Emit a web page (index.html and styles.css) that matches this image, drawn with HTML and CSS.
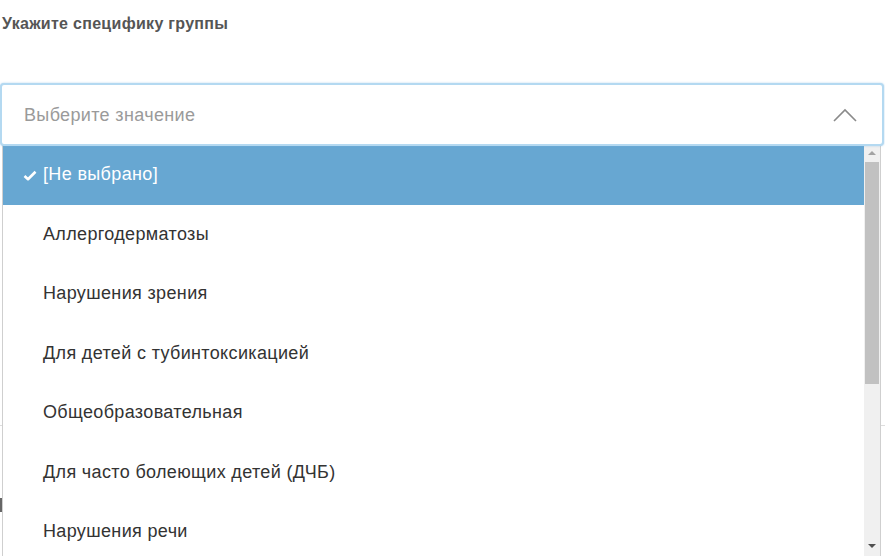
FILE: index.html
```html
<!DOCTYPE html>
<html lang="ru">
<head>
<meta charset="utf-8">
<title>Укажите специфику группы</title>
<link rel="stylesheet" href="styles.css">
</head>
<body>
<div class="page">
  <div class="field-label">Укажите специфику группы</div>
  <div class="select">
    <div class="select-box">
      <span class="placeholder">Выберите значение</span>
      <svg class="chevron" width="24" height="14" viewBox="0 0 24 14"><path d="M1 13 L12 2 L23 13" fill="none" stroke="#8a8a8a" stroke-width="1.6"/></svg>
    </div>
    <div class="dropdown">
      <ul class="options">
        <li class="option selected"><svg class="check" width="14" height="11" viewBox="0 0 14 11"><path d="M1.5 6 L5 9.2 L12.5 1.8" fill="none" stroke="#fff" stroke-width="2.6" stroke-linejoin="round"/></svg>[Не выбрано]</li>
        <li class="option">Аллергодерматозы</li>
        <li class="option">Нарушения зрения</li>
        <li class="option">Для детей с тубинтоксикацией</li>
        <li class="option">Общеобразовательная</li>
        <li class="option">Для часто болеющих детей (ДЧБ)</li>
        <li class="option">Нарушения речи</li>
      </ul>
      <div class="scrollbar">
        <div class="arrow up"></div>
        <div class="thumb"></div>
        <div class="arrow down"></div>
      </div>
    </div>
  </div>
  <div class="peek peek-left-line"></div>
  <div class="peek peek-left-mark"></div>
  <div class="peek peek-right-line"></div>
</div>
</body>
</html>
```

FILE: styles.css
```css
* { box-sizing: border-box; }
html, body { margin: 0; padding: 0; background: #fff; }
body { width: 885px; height: 557px; overflow: hidden; font-family: "Liberation Sans", Arial, sans-serif; }
.page { position: relative; width: 885px; height: 557px; }
.field-label {
  padding: 15px 0 0 2px;
  font-size: 16px;
  letter-spacing: 0.3px;
  font-weight: bold;
  color: #555;
  line-height: 18px;
  height: 83px;
}
.select { width: 885px; }
.select-box {
  height: 63px;
  margin: 0 1px 0 0;
  border: 2px solid #b4d9f1;
  border-radius: 4px;
  box-shadow: 0 0 2px rgba(120, 180, 225, 0.6);
  display: flex;
  align-items: center;
  justify-content: space-between;
  padding: 1px 25px 0 22px;
  background: #fff;
  position: relative;
  z-index: 1;
}
.placeholder { font-size: 18px; letter-spacing: 0.35px; color: #9a9a9a; }
.chevron { display: block; margin-top: 0; }
.dropdown {
  margin-left: 2px;
  width: 879px;
  height: 411px;
  border-left: 1px solid #cfcfcf;
  border-right: 1px solid #cfcfcf;
  display: flex;
  background: #fff;
  overflow: hidden;
  margin-top: -1px;
}
.options { list-style: none; margin: 0; padding: 0; flex: 1; }
.option {
  height: 59.5px;
  display: flex;
  align-items: center;
  padding-left: 40px;
  font-size: 18px;
  letter-spacing: 0.35px;
  color: #333;
}
.option.selected {
  background: #67a7d2;
  color: #fff;
  padding-left: 20px;
}
.check { margin-right: 6px; margin-top: 1px; }
.scrollbar {
  width: 16px;
  background: #f0f0f0;
  display: flex;
  flex-direction: column;
  align-items: center;
}
.thumb { width: 14px; height: 222px; background: #c1c1c1; margin-top: 7px; }
.arrow { width: 0; height: 0; border-left: 4px solid transparent; border-right: 4px solid transparent; }
.arrow.up { border-bottom: 4px solid #a3a3a3; margin-top: 6px; }
.arrow.down { border-top: 4px solid #505050; margin-top: auto; margin-bottom: 8px; }
.peek { position: absolute; }
.peek-left-line { left: 0; top: 425px; width: 2px; height: 1px; background: #ddd; }
.peek-left-mark { left: 0; top: 498px; width: 2px; height: 14px; background: #666; }
.peek-right-line { left: 881px; top: 425px; width: 4px; height: 1px; background: #ddd; }
```
